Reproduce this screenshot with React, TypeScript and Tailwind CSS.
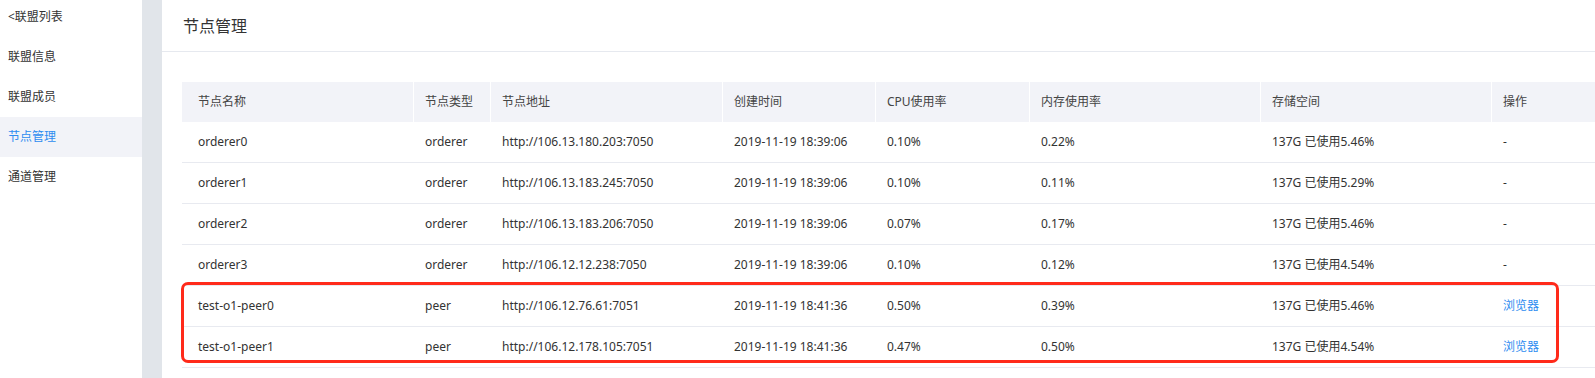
import React from "react";

const rows = [
  ["orderer0", "orderer", "http://106.13.180.203:7050", "2019-11-19 18:39:06", "0.10%", "0.22%", "137G 已使用5.46%", "-"],
  ["orderer1", "orderer", "http://106.13.183.245:7050", "2019-11-19 18:39:06", "0.10%", "0.11%", "137G 已使用5.29%", "-"],
  ["orderer2", "orderer", "http://106.13.183.206:7050", "2019-11-19 18:39:06", "0.07%", "0.17%", "137G 已使用5.46%", "-"],
  ["orderer3", "orderer", "http://106.12.12.238:7050", "2019-11-19 18:39:06", "0.10%", "0.12%", "137G 已使用4.54%", "-"],
  ["test-o1-peer0", "peer", "http://106.12.76.61:7051", "2019-11-19 18:41:36", "0.50%", "0.39%", "137G 已使用5.46%", "浏览器"],
  ["test-o1-peer1", "peer", "http://106.12.178.105:7051", "2019-11-19 18:41:36", "0.47%", "0.50%", "137G 已使用4.54%", "浏览器"],
];

const headers = ["节点名称", "节点类型", "节点地址", "创建时间", "CPU使用率", "内存使用率", "存储空间", "操作"];

const menu = ["<联盟列表", "联盟信息", "联盟成员", "节点管理", "通道管理"];

const cols = "grid grid-cols-[231px_77px_232px_153px_154px_231px_231px_1fr]";

export default function App() {
  return (
    <div
      className="flex h-[378px] w-[1595px] overflow-hidden bg-white text-[12px] text-[#333]"
      style={{ fontFamily: '"Noto Sans", "Noto Sans CJK SC", sans-serif' }}
    >
      <div className="w-[142px] shrink-0 bg-white">
        <div className="-mt-[3px] flex flex-col">
          {menu.map((m, i) => (
            <div
              key={m}
              className={
                "flex h-10 items-center pl-2 " +
                (i === 3 ? "bg-[#f2f3f8] text-[#2d8cf0]" : "text-[#333]")
              }
            >
              {m}
            </div>
          ))}
        </div>
      </div>
      <div className="w-5 shrink-0 bg-[#e1e5ea]" />
      <div className="min-w-0 flex-1 bg-white">
        <div className="flex h-[52px] items-center border-b border-[#e6e9ef] pl-[21px] text-[16px] text-[#333]">
          节点管理
        </div>
        <div className="relative ml-5 mt-[30px]">
          <div className={cols + " h-10 bg-[#f2f3f8] text-[#444]"}>
            {headers.map((h, i) => (
              <div
                key={h}
                className={
                  "flex items-center " + (i === 0 ? "pl-4" : "border-l border-white pl-[11px]")
                }
              >
                {h}
              </div>
            ))}
          </div>
          {rows.map((r) => (
            <div key={r[0]} className={cols + " h-[41px] border-b border-[#e8eaf0]"}>
              {r.map((c, i) => (
                <div
                  key={i}
                  className={
                    "flex items-center " +
                    (i === 0 ? "pl-4" : "pl-3") +
                    (c === "浏览器" ? " text-[#2d8cf0]" : "")
                  }
                >
                  {c}
                </div>
              ))}
            </div>
          ))}
          <div className="pointer-events-none absolute left-[-1px] top-[200px] h-[81px] w-[1378px] rounded-[7px] border-[3px] border-[#ff2a1a]" />
        </div>
      </div>
    </div>
  );
}
